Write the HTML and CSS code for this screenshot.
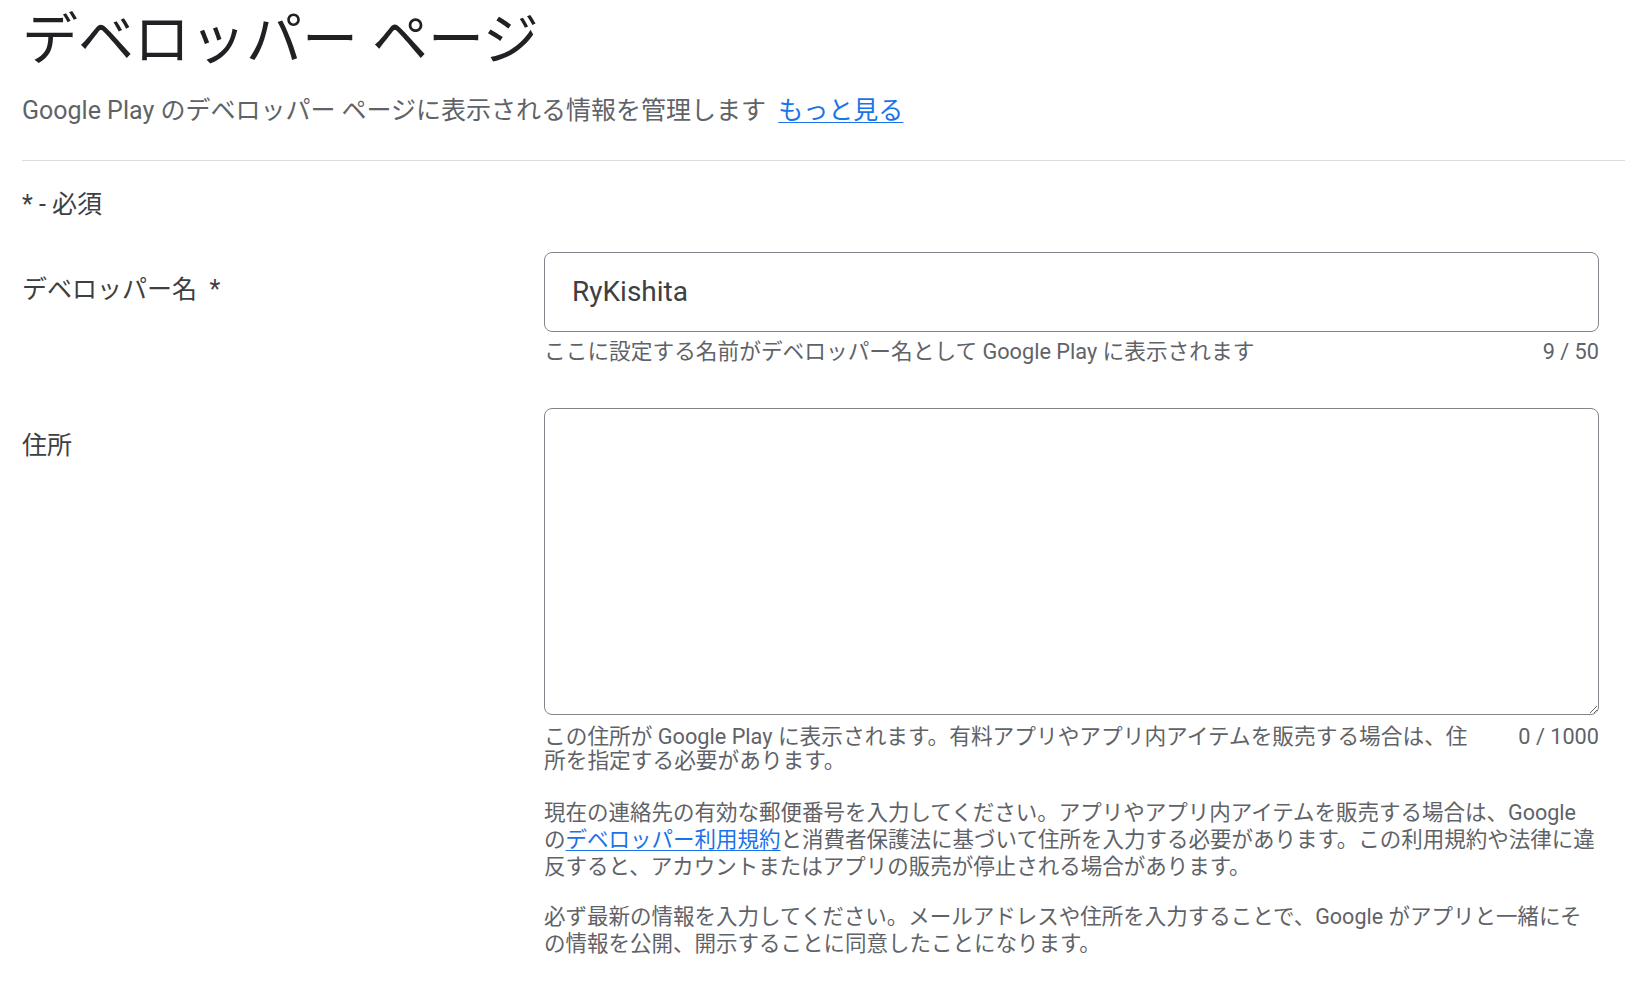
FILE: index.html
```html
<!DOCTYPE html>
<html lang="ja">
<head>
<meta charset="utf-8">
<title>デベロッパー ページ</title>
<link rel="stylesheet" href="styles.css">
</head>
<body>
<div class="page">
  <header class="header">
    <h1 class="title">デベロッパー ページ</h1>
    <p class="subtitle">Google Play のデベロッパー ページに表示される情報を管理します <a class="link more" href="#">もっと見る</a></p>
  </header>
  <div class="divider"></div>
  <div class="form">
    <p class="required-note">* - 必須</p>

    <div class="row row-name">
      <div class="label">デベロッパー名 &nbsp;*</div>
      <div class="field">
        <div class="input-box"><input class="input" type="text" value="RyKishita"></div>
        <div class="hint-row">
          <div class="hint">ここに設定する名前がデベロッパー名として Google Play に表示されます</div>
          <div class="counter">9 / 50</div>
        </div>
      </div>
    </div>

    <div class="row row-address">
      <div class="label">住所</div>
      <div class="field">
        <textarea class="textarea"></textarea>
        <div class="hint-row hint-row-area">
          <div class="hint">この住所が Google Play に表示されます。有料アプリやアプリ内アイテムを販売する場合は、住所を指定する必要があります。</div>
          <div class="counter">0 / 1000</div>
        </div>
        <p class="note first">現在の連絡先の有効な郵便番号を入力してください。アプリやアプリ内アイテムを販売する場合は、Google の<a class="link" href="#">デベロッパー利用規約</a>と消費者保護法に基づいて住所を入力する必要があります。この利用規約や法律に違反すると、アカウントまたはアプリの販売が停止される場合があります。</p>
        <p class="note">必ず最新の情報を入力してください。メールアドレスや住所を入力することで、Google がアプリと一緒にその情報を公開、開示することに同意したことになります。</p>
      </div>
    </div>
  </div>
</div>
</body>
</html>
```

FILE: styles.css
```css
html, body {
  margin: 0;
  padding: 0;
  background: #ffffff;
}

body {
  font-family: Roboto, "Noto Sans CJK JP", sans-serif;
  color: #3c4043;
}

.page {
  padding-top: 8px;
  width: 1625px;
  height: 988px;
  overflow: hidden;
  box-sizing: border-box;
}

.header {
  padding-left: 22px;
}

.title {
  margin: 0;
  font-size: 56px;
  line-height: 64px;
  font-weight: 400;
  color: #202124;
}

.subtitle {
  margin: 23px 0 0;
  font-size: 25px;
  line-height: 32px;
  color: #5f6368;
}

.link {
  color: #1a73e8;
  text-decoration: underline;
  text-underline-offset: 3px;
  text-decoration-thickness: 1px;
}

.more {
  margin-left: 6px;
}

.divider {
  margin: 33px 0 0 22px;
  height: 1px;
  background: #dadce0;
}

.form {
  padding: 0 26px 0 22px;
}

.required-note {
  margin: 30px 0 0;
  font-size: 25px;
  line-height: 28px;
  color: #3c4043;
}

.row {
  display: flex;
  align-items: flex-start;
}

.row-name {
  margin-top: 33px;
}

.row-address {
  margin-top: 44px;
}

.label {
  width: 522px;
  flex: none;
  padding-top: 22px;
  font-size: 25px;
  line-height: 32px;
  color: #3c4043;
}

.field {
  flex: 1;
  min-width: 0;
}

.input-box {
  height: 80px;
  box-sizing: border-box;
  border: 1px solid #80868b;
  border-radius: 8px;
  display: flex;
  align-items: center;
  padding: 0 27px;
}

.input {
  border: none;
  outline: none;
  padding: 0;
  margin: 0;
  width: 100%;
  font-family: Roboto, "Noto Sans CJK JP", sans-serif;
  font-size: 28px;
  line-height: 36px;
  color: #3c4043;
  background: transparent;
}

.textarea {
  display: block;
  width: 100%;
  height: 307px;
  box-sizing: border-box;
  border: 1px solid #80868b;
  border-radius: 8px;
  margin: 0;
  padding: 16px 27px;
  font-family: Roboto, "Noto Sans CJK JP", sans-serif;
  font-size: 28px;
  color: #3c4043;
  resize: vertical;
  outline: none;
  background: #ffffff;
}

.hint-row {
  display: flex;
  align-items: flex-start;
  margin-top: 8px;
}

.hint-row-area {
  margin-top: 10px;
}

.hint {
  flex: 1;
  min-width: 0;
  font-size: 21.7px;
  line-height: 24px;
  color: #5f6368;
}

.counter {
  flex: none;
  margin-left: 48px;
  font-size: 21.7px;
  line-height: 24px;
  color: #5f6368;
}

.note {
  margin: 23px 0 0;
  font-size: 21.5px;
  line-height: 27px;
  color: #5f6368;
}

.note.first {
  margin-top: 26px;
}
```
